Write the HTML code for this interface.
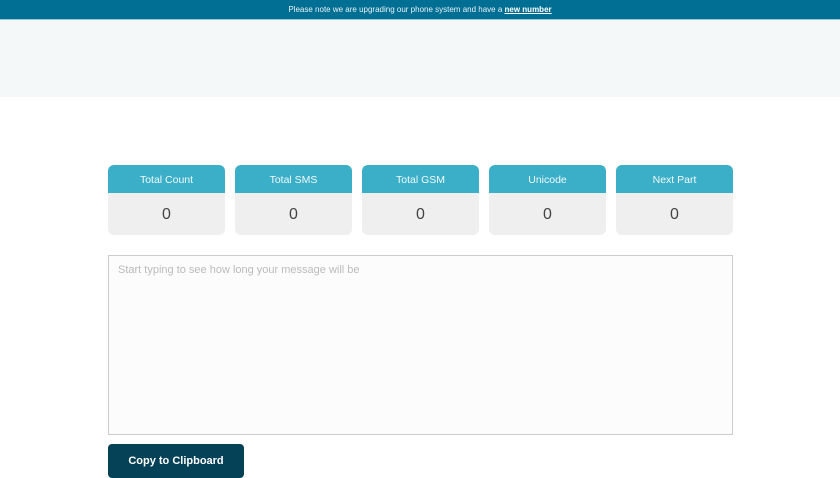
<!DOCTYPE html><html><head><style>
body{margin:0;width:840px;height:472px;overflow:hidden;font-family:"Liberation Sans",sans-serif;background:#fff}
.top{height:19px;background:#006f93;color:#e8f2f6;font-size:8px;text-align:center;line-height:20px;border-bottom:1px solid #9cc7d6}
.top u{color:#fff;font-weight:bold}
.hero{height:77px;background:#f5f8f9}
.card{position:absolute;top:165px;width:117px;height:70px;border-radius:6px;background:#efefef;overflow:hidden}
.card .h{height:28px;background:#3bafc8;color:#f2fafc;font-size:10.5px;text-align:center;line-height:30px}
.card .v{text-align:center;font-size:16px;color:#444;line-height:43px}
.ta{position:absolute;left:108px;top:255px;color:#bbb;font-size:11px;padding:8px 9px;box-sizing:border-box;width:625px;height:180px;border:1px solid #ccc;background:#fcfcfc}
.btn{position:absolute;left:108px;top:444px;width:136px;height:34px;background:#064257;color:#fff;border-radius:4px;font-weight:bold;font-size:11px;text-align:center;line-height:34px}
</style></head><body>
<div class="top">Please note we are upgrading our phone system and have a <u>new number</u></div>
<div class="hero"></div>
<div class="card" style="left:108px"><div class="h">Total Count</div><div class="v">0</div></div>
<div class="card" style="left:235px"><div class="h">Total SMS</div><div class="v">0</div></div>
<div class="card" style="left:362px"><div class="h">Total GSM</div><div class="v">0</div></div>
<div class="card" style="left:489px"><div class="h">Unicode</div><div class="v">0</div></div>
<div class="card" style="left:616px"><div class="h">Next Part</div><div class="v">0</div></div>
<div class="ta">Start typing to see how long your message will be</div>
<div class="btn">Copy to Clipboard</div>
</body></html>
